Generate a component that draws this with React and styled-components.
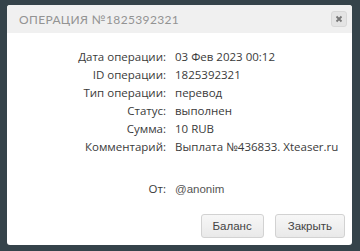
import { Fragment } from "react";
import styled, { createGlobalStyle } from "styled-components";

const Global = createGlobalStyle`
  html, body {
    margin: 0;
    padding: 0;
    background: #35434a;
  }
  body {
    font-family: "Open Sans", "Liberation Sans", sans-serif;
  }
`;

const Page = styled.div`
  width: 360px;
  height: 251px;
  padding: 5px 0 0 7px;
  box-sizing: border-box;
`;

const Dialog = styled.div`
  width: 345px;
  height: 240px;
  background: #ffffff;
  border-radius: 3px;
  display: flex;
  flex-direction: column;
  overflow: hidden;
`;

const Header = styled.div`
  height: 28px;
  background: #f0f0f0;
  display: flex;
  align-items: center;
  justify-content: space-between;
  padding: 0 5px 0 12px;
`;

const Title = styled.div`
  font-family: "Lato", "Liberation Sans", sans-serif;
  font-size: 12px;
  letter-spacing: 0.35px;
  color: #939393;
  text-transform: uppercase;
`;

const CloseButton = styled.div`
  width: 14px;
  height: 14px;
  border: 1px solid #d8d8d8;
  border-radius: 3px;
  background: #e4e4e4;
  display: flex;
  align-items: center;
  justify-content: center;
`;

const Body = styled.div`
  padding: 15px 0 0;
  display: grid;
  grid-template-columns: 159px 1fr;
  column-gap: 9px;
  font-size: 11.5px;
`;

const Label = styled.div`
  text-align: right;
  line-height: 18px;
  color: #3a3a3a;
  margin-top: ${(p) => (p.$gap ? "24px" : "0")};
`;

const Value = styled.div`
  line-height: 18px;
  margin-top: ${(p) => (p.$gap ? "24px" : "0")};
  font-family: ${(p) =>
    p.$alt ? '"Liberation Sans", sans-serif' : "inherit"};
  font-size: ${(p) => (p.$alt ? "11.5px" : "inherit")};
  color: ${(p) => (p.$alt ? "#555" : "#3a3a3a")};
`;

const Footer = styled.div`
  margin-top: auto;
  display: flex;
  justify-content: flex-end;
  gap: 11px;
  padding: 0 7px 7px 0;
`;

const Button = styled.div`
  height: 22px;
  padding: 0 ${(p) => p.$pad || 10}px;
  display: flex;
  align-items: center;
  border: 1px solid #d2d2d2;
  border-radius: 3px;
  background: linear-gradient(#f7f7f7, #e9e9e9);
  font-family: "Liberation Sans", sans-serif;
  font-size: 11.5px;
  color: #444;
`;

const rows = [
  ["Дата операции:", "03 Фев 2023 00:12"],
  ["ID операции:", "1825392321"],
  ["Тип операции:", "перевод"],
  ["Статус:", "выполнен"],
  ["Сумма:", "10 RUB"],
  ["Комментарий:", "Выплата №436833. Xteaser.ru"],
];

export default function App() {
  return (
    <>
      <Global />
      <Page>
        <Dialog>
          <Header>
            <Title>Операция №1825392321</Title>
            <CloseButton>
              <svg width="8" height="8" viewBox="0 0 8 8">
                <path
                  d="M1.5 1.5 L6.5 6.5 M6.5 1.5 L1.5 6.5"
                  stroke="#777"
                  strokeWidth="1.8"
                />
              </svg>
            </CloseButton>
          </Header>
          <Body>
            {rows.map(([l, v]) => (
              <Fragment key={l}>
                <Label>{l}</Label>
                <Value>{v}</Value>
              </Fragment>
            ))}
            <Label $gap>От:</Label>
            <Value $gap $alt>
              @anonim
            </Value>
          </Body>
          <Footer>
            <Button $pad={11}>Баланс</Button>
            <Button $pad={12}>Закрыть</Button>
          </Footer>
        </Dialog>
      </Page>
    </>
  );
}
